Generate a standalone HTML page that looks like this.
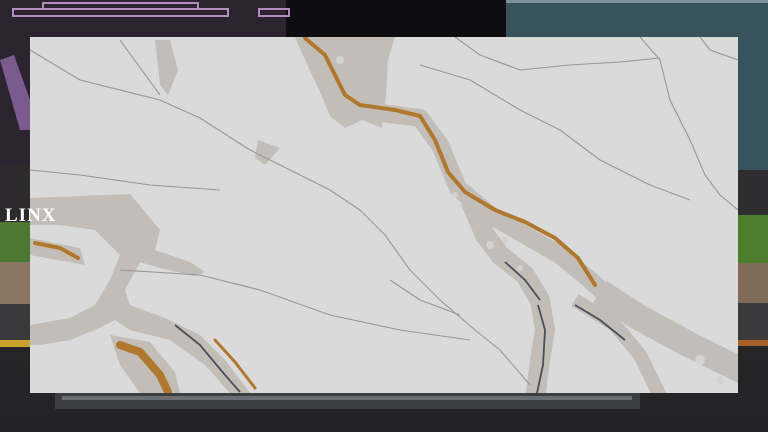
<!DOCTYPE html>
<html><head><style>html,body{margin:0;padding:0;width:768px;height:432px;overflow:hidden;background:#2a2a2e}</style></head><body>
<svg width="768" height="432" viewBox="0 0 768 432" xmlns="http://www.w3.org/2000/svg">
<defs>
<linearGradient id="road" x1="0" y1="0" x2="0" y2="1"><stop offset="0" stop-color="#303034"/><stop offset="1" stop-color="#232326"/></linearGradient>
</defs>
<rect width="768" height="432" fill="url(#road)"/>
<rect x="0" y="0" width="286" height="170" fill="#2b232d"/>
<rect x="286" y="0" width="220" height="40" fill="#0e0e10"/>
<rect x="506" y="0" width="262" height="170" fill="#38525c"/>
<rect x="506" y="0" width="262" height="3" fill="#7d9298"/>
<g fill="none" stroke="#b58cc0" stroke-width="2">
<rect x="13" y="9" width="215" height="7"/><rect x="43" y="3" width="155" height="6"/>
<rect x="259" y="9" width="30" height="7"/>
</g>
<polygon points="0,60 14,55 30,100 30,130 20,130" fill="#7b5a8e"/>
<rect x="0" y="165" width="30" height="58" fill="#2c2a2c"/>
<rect x="0" y="222" width="30" height="40" fill="#4c7832"/>
<rect x="0" y="262" width="30" height="42" fill="#8a7662"/>
<rect x="0" y="304" width="30" height="36" fill="#3a3a3c"/>
<rect x="0" y="340" width="30" height="7" fill="#c9a22a"/>
<rect x="738" y="170" width="30" height="45" fill="#2e2e30"/>
<rect x="738" y="215" width="30" height="48" fill="#4d7e2e"/>
<rect x="738" y="263" width="30" height="40" fill="#806a58"/>
<rect x="738" y="303" width="30" height="37" fill="#3a3a3d"/>
<rect x="738" y="340" width="30" height="6" fill="#a6602a"/>
<rect x="55" y="393" width="585" height="16" fill="#3c3e42"/>
<rect x="62" y="396" width="570" height="4" fill="#6a6d72"/>
<svg x="30" y="37" width="708" height="356" viewBox="30 37 708 356" overflow="hidden">
<rect x="30" y="37" width="708" height="356" fill="#dadadb"/>
<g fill="#c2bdb6">
<polygon points="295,37 395,37 388,60 386,95 382,128 362,120 345,128 330,116 320,92 306,62"/>
<polygon points="30,198 130,194 160,230 155,250 190,262 205,272 195,276 160,268 140,262 125,290 130,305 165,318 200,335 225,360 250,393 230,393 205,365 170,340 150,335 130,330 115,320 95,330 70,340 40,345 30,345 30,325 70,318 95,305 110,280 120,255 95,230 60,225 30,225"/>
<polygon points="110,335 150,342 175,372 180,393 140,393 120,365"/>
<polygon points="30,238 80,248 85,265 30,255"/>
<polygon points="155,40 170,40 178,70 168,95 160,85"/>
<polygon points="258,140 280,148 265,165 255,158"/>
</g>
<g fill="none" stroke="#c2bdb6" stroke-linecap="butt" stroke-linejoin="round">
<polyline stroke-width="18" points="360,110 420,118 440,145 458,188 490,215 525,235 560,255 590,280 610,298"/>
<polyline stroke-width="26" points="600,292 640,318 690,345 745,372"/>
<polyline stroke-width="20" points="470,200 485,235 500,255 525,275 540,300 545,330 540,360 535,400"/>
<polyline stroke-width="14" points="575,300 615,325 640,355 662,400"/>
</g>
<g fill="none" stroke="#b0782e" stroke-linejoin="round" stroke-linecap="round">
<polyline stroke-width="4" points="305,38 325,55 345,95 360,105 395,110 420,116 435,140 448,172 465,192 495,210 525,222 555,238 578,258 595,285"/>
<polyline stroke-width="8" points="120,345 140,352 160,375 168,392"/>
<polyline stroke-width="4" points="35,243 60,248 78,258"/>
<polyline stroke-width="3" points="215,340 235,362 255,388"/>
</g>
<g fill="none" stroke="#4a4e5a" stroke-width="1.8">
<polyline points="505,262 525,280 540,300"/>
<polyline points="538,305 545,330 543,365 537,393"/>
<polyline points="575,305 600,320 625,340"/>
<polyline points="175,325 200,345 225,375 240,392"/>
</g>
<g fill="none" stroke="#9a9792" stroke-width="1.1">
<polyline points="30,50 80,80 160,100 200,118 250,150"/>
<polyline points="120,40 160,95"/>
<polyline points="250,150 290,170 330,190 360,210 385,235 410,270 440,300 475,330 500,350 530,385"/>
<polyline points="120,270 200,275 260,290 330,315 400,330 470,340"/>
<polyline points="420,65 470,80 520,110 560,130 600,160 650,185 690,200"/>
<polyline points="455,37 480,55 520,70 570,65 620,62 660,58"/>
<polyline points="640,37 660,60 670,100 690,140 705,175 720,195 738,210"/>
<polyline points="700,37 710,50 738,60"/>
<polyline points="30,170 80,175 150,185 220,190"/>
<polyline points="390,280 420,300 460,315"/>
</g>
<g fill="#d2d2d3">
<circle cx="455" cy="195" r="3"/><circle cx="490" cy="245" r="4"/><circle cx="505" cy="240" r="3"/><circle cx="520" cy="268" r="3"/>
<circle cx="700" cy="360" r="5"/><circle cx="720" cy="380" r="4"/><circle cx="340" cy="60" r="4"/>
</g>
</svg>
<text x="5" y="221" font-family="Liberation Serif, serif" font-weight="bold" font-size="19" fill="#ffffff" letter-spacing="1">LINX</text>
</svg>
</body></html>
